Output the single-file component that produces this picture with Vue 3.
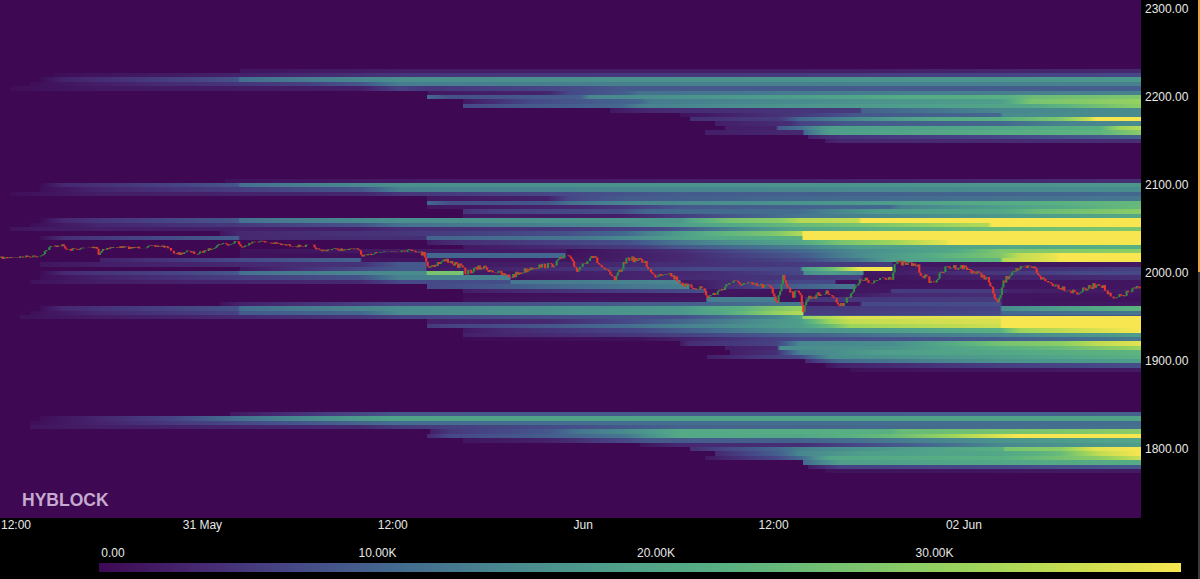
<template>
  <div class="page">
    <div class="main">
      <div class="top">
        <div class="chart">
          <svg class="heatmap" width="1141" height="518" viewBox="0 0 1141 518">
            <defs>
              <linearGradient
                v-for="row in rows"
                :id="row.id"
                :key="row.id"
                gradientUnits="userSpaceOnUse"
                x1="0"
                y1="0"
                x2="1141"
                y2="0"
              >
                <stop v-for="(s, i) in row.stops" :key="i" :offset="s.offset" :stop-color="s.color" />
              </linearGradient>
            </defs>
            <rect width="1141" height="518" fill="#3e0853" />
            <g class="soft">
              <rect
                v-for="row in rows"
                :key="row.id"
                x="0"
                :y="row.y"
                width="1141"
                :height="row.h"
                :fill="`url(#${row.id})`"
                shape-rendering="crispEdges"
              />
              <rect x="803" y="315" width="338" height="1" fill="#46558a" />
              <path :d="candles.green" class="candle green" />
              <path :d="candles.red" class="candle red" />
            </g>
          </svg>
          <div class="logo">HYBLOCK</div>
        </div>
        <div class="yaxis">
          <span v-for="p in prices" :key="p">{{ p }}</span>
        </div>
      </div>
      <div class="xaxis">
        <span v-for="(t, i) in times" :key="i" class="tick">{{ t }}</span>
      </div>
      <div class="legend">
        <div class="legend-labels">
          <span v-for="l in legendLabels" :key="l" class="legend-label">{{ l }}</span>
        </div>
        <div class="legend-bar"></div>
      </div>
    </div>
    <div class="scroll">
      <div class="thumb"></div>
    </div>
  </div>
</template>

<script setup>
const prices = ["2300.00", "2200.00", "2100.00", "2000.00", "1900.00", "1800.00"];
const times = ["12:00", "31 May", "12:00", "Jun", "12:00", "02 Jun"];
const legendLabels = ["0.00", "10.00K", "20.00K", "30.00K"];

const palette = [
  [0, [62, 8, 83]],
  [0.1, [70, 40, 113]],
  [0.2, [70, 72, 135]],
  [0.3, [67, 104, 143]],
  [0.4, [72, 135, 143]],
  [0.5, [78, 158, 139]],
  [0.6, [88, 176, 130]],
  [0.7, [120, 195, 112]],
  [0.8, [155, 212, 92]],
  [0.9, [205, 222, 80]],
  [1, [248, 230, 80]],
];

function colorOf(v) {
  for (let i = 1; i < palette.length; i++) {
    if (v <= palette[i][0]) {
      const [a, ca] = palette[i - 1];
      const [b, cb] = palette[i];
      const t = (v - a) / (b - a);
      const c = ca.map((n, j) => Math.round(n + (cb[j] - n) * t));
      return `rgb(${c[0]},${c[1]},${c[2]})`;
    }
  }
  return "rgb(248,230,80)";
}

// k is the row index, each row is one 5 USD price bucket. pairs are x, value
const bands = {
  0: [240, 0.04, 400, 0.07, 800, 0.07, 1141, 0.1],
  1: [53, 0.02, 240, 0.08, 400, 0.14, 800, 0.16, 1141, 0.2],
  2: [40, 0.01, 63, 0.08, 170, 0.17, 238, 0.23, 240, 0.32, 400, 0.43, 1141, 0.47],
  3: [30, 0.02, 100, 0.07, 170, 0.11, 300, 0.17, 360, 0.24, 400, 0.37, 1141, 0.38],
  4: [10, 0.02, 100, 0.05, 360, 0.07, 400, 0.18, 428, 0.14, 560, 0.2, 625, 0.25, 1141, 0.27],
  5: [428, 0.05, 548, 0.09, 570, 0.2, 625, 0.27, 640, 0.33, 800, 0.36, 1141, 0.38],
  6: [427, 0.3, 450, 0.22, 580, 0.27, 590, 0.4, 680, 0.45, 800, 0.5, 900, 0.57, 1010, 0.6, 1030, 0.66, 1141, 0.72],
  7: [463, 0.05, 530, 0.2, 640, 0.3, 650, 0.36, 800, 0.42, 893, 0.46, 1000, 0.5, 1030, 0.7, 1141, 0.78],
  8: [463, 0.2, 510, 0.24, 620, 0.3, 640, 0.38, 800, 0.46, 1030, 0.55, 1141, 0.76],
  9: [610, 0.05, 650, 0.1, 800, 0.14, 860, 0.16, 862, 0.28, 1000, 0.4, 1141, 0.42],
  10: [680, 0.03, 800, 0.15, 860, 0.25, 1000, 0.3, 1003, 0.42, 1141, 0.42],
  11: [690, 0.12, 780, 0.16, 800, 0.3, 860, 0.42, 930, 0.55, 1000, 0.6, 1060, 0.72, 1090, 0.9, 1096, 1, 1141, 1],
  12: [715, 0.07, 790, 0.12, 800, 0.18, 850, 0.25, 1000, 0.3, 1060, 0.38, 1141, 0.42],
  13: [725, 0.07, 776, 0.08, 778, 0.25, 800, 0.33, 830, 0.5, 1000, 0.55, 1100, 0.6, 1120, 0.8, 1141, 0.85],
  14: [705, 0.07, 803, 0.1, 804, 0.3, 830, 0.5, 1000, 0.58, 1100, 0.62, 1141, 0.75],
  15: [808, 0.08, 840, 0.14, 1000, 0.2, 1141, 0.28],
  16: [825, 0.06, 840, 0.1, 1141, 0.12],

  25: [225, 0.03, 400, 0.06, 800, 0.08, 1141, 0.12],
  26: [40, 0.01, 63, 0.1, 170, 0.18, 238, 0.24, 240, 0.33, 400, 0.44, 1141, 0.47],
  27: [40, 0.02, 100, 0.09, 240, 0.17, 360, 0.24, 400, 0.38, 1141, 0.42],
  28: [10, 0.02, 100, 0.07, 360, 0.09, 400, 0.14, 560, 0.2, 680, 0.26, 1141, 0.3],
  29: [427, 0.05, 548, 0.08, 570, 0.2, 625, 0.26, 800, 0.3, 1141, 0.35],
  30: [427, 0.3, 450, 0.22, 548, 0.25, 570, 0.33, 625, 0.4, 800, 0.45, 900, 0.5, 950, 0.55, 1141, 0.64],
  31: [427, 0.05, 463, 0.05, 580, 0.1, 625, 0.15, 680, 0.25, 800, 0.28, 890, 0.3, 900, 0.38, 1000, 0.5, 1141, 0.65],
  32: [463, 0.14, 500, 0.18, 620, 0.22, 650, 0.3, 800, 0.32, 880, 0.5, 1000, 0.55, 1040, 0.66, 1141, 0.75],
  33: [463, 0.05, 620, 0.07, 800, 0.35, 1141, 0.56],
  34: [40, 0.01, 63, 0.1, 100, 0.14, 238, 0.24, 240, 0.33, 400, 0.44, 680, 0.47, 690, 0.55, 730, 0.7, 780, 0.75, 800, 0.85, 858, 0.88, 862, 1, 1141, 1],
  35: [30, 0.02, 97, 0.09, 240, 0.15, 360, 0.23, 400, 0.33, 600, 0.4, 800, 0.65, 860, 0.7, 988, 0.85, 992, 1, 1141, 1],
  36: [10, 0.03, 30, 0.05, 100, 0.07, 360, 0.08, 400, 0.12, 560, 0.14, 660, 0.2, 800, 0.55, 900, 0.62, 1141, 0.72],
  37: [220, 0.04, 240, 0.1, 400, 0.14, 560, 0.22, 625, 0.3, 705, 0.58, 775, 0.72, 802, 0.85, 803, 1, 1141, 1],
  38: [40, 0.02, 63, 0.12, 160, 0.2, 238, 0.26, 240, 0.1, 400, 0.12, 426, 0.12, 427, 0.28, 580, 0.35, 620, 0.4, 700, 0.55, 802, 0.6, 803, 1, 1141, 1],
  39: [427, 0.07, 460, 0.12, 625, 0.22, 680, 0.35, 800, 0.55, 840, 0.7, 890, 0.8, 945, 0.95, 950, 1, 1141, 1],
  40: [463, 0.05, 540, 0.1, 640, 0.17, 680, 0.25, 800, 0.38, 860, 0.5, 1141, 0.6],
  41: [240, 0.03, 400, 0.06, 566, 0.06, 567, 0.02, 680, 0.12, 800, 0.3, 860, 0.42, 950, 0.55, 1000, 0.72, 1141, 0.76],
  42: [240, 0.03, 426, 0.02, 427, 0.3, 565, 0.3, 566, 0.03, 680, 0.1, 800, 0.25, 860, 0.42, 1000, 0.72, 1020, 0.88, 1055, 0.96, 1060, 1, 1141, 1],
  43: [100, 0.08, 240, 0.2, 360, 0.28, 362, 0.04, 566, 0.04, 680, 0.1, 800, 0.2, 860, 0.35, 892, 0.5, 1000, 0.62, 1003, 0.85, 1055, 0.96, 1060, 1, 1141, 1],
  44: [40, 0.04, 100, 0.07, 240, 0.1, 360, 0.13, 400, 0.25, 426, 0.25, 427, 0.04, 680, 0.12, 800, 0.16, 892, 0.16, 893, 0.04, 1141, 0.05],
  45: [240, 0.05, 400, 0.25, 426, 0.25, 427, 0.05, 700, 0.2, 800, 0.2, 803, 0.5, 830, 0.65, 860, 0.98, 892, 1, 893, 0.06, 1020, 0.1, 1141, 0.18],
  46: [40, 0.01, 63, 0.1, 100, 0.14, 170, 0.18, 238, 0.25, 240, 0.33, 400, 0.42, 426, 0.42, 427, 0.7, 463, 0.7, 464, 0.05, 700, 0.1, 803, 0.2, 804, 0.42, 830, 0.5, 863, 0.42, 864, 0.04, 1000, 0.15, 1090, 0.2, 1141, 0.2],
  47: [40, 0.02, 100, 0.08, 240, 0.17, 360, 0.23, 400, 0.38, 510, 0.38, 511, 0.04, 800, 0.15, 860, 0.18, 864, 0.03, 1000, 0.08, 1141, 0.12],
  48: [30, 0.03, 100, 0.07, 360, 0.1, 400, 0.2, 510, 0.22, 511, 0.35, 680, 0.4, 681, 0.05, 800, 0.2, 835, 0.2, 836, 0.03, 1141, 0.04],
  49: [427, 0.2, 600, 0.33, 689, 0.38, 690, 0.04, 800, 0.28, 855, 0.35, 856, 0.04, 1141, 0.04],
  50: [463, 0.07, 680, 0.2, 706, 0.22, 707, 0.04, 800, 0.04, 890, 0.05, 892, 0.16, 1000, 0.16, 1008, 0.08, 1141, 0.05],
  51: [463, 0.02, 707, 0.04, 830, 0.03, 890, 0.1, 1000, 0.12, 1003, 0.04, 1141, 0.04],
  52: [463, 0.03, 706, 0.05, 707, 0.37, 776, 0.37, 777, 0.03, 805, 0.03, 806, 0.14, 1000, 0.16, 1003, 0.04, 1141, 0.03],
  53: [220, 0.03, 240, 0.08, 400, 0.2, 707, 0.28, 803, 0.35, 804, 0.04, 860, 0.05, 862, 0.2, 1000, 0.22, 1003, 0.04, 1141, 0.05],
  54: [40, 0.02, 63, 0.1, 100, 0.13, 238, 0.23, 240, 0.32, 400, 0.42, 680, 0.47, 710, 0.55, 740, 0.6, 776, 0.72, 803, 0.78, 804, 0.15, 1000, 0.18, 1002, 0.42, 1141, 0.62],
  55: [30, 0.02, 100, 0.1, 238, 0.18, 240, 0.26, 360, 0.3, 400, 0.42, 680, 0.47, 720, 0.55, 776, 0.78, 803, 0.86, 804, 0.16, 1000, 0.2, 1002, 0.3, 1141, 0.35],
  56: [20, 0.03, 100, 0.06, 240, 0.1, 360, 0.14, 400, 0.18, 680, 0.22, 776, 0.4, 802, 0.55, 803, 0.78, 830, 0.85, 850, 0.93, 1000, 0.96, 1002, 1, 1141, 1],
  57: [427, 0.07, 550, 0.1, 625, 0.2, 800, 0.5, 830, 0.8, 850, 0.88, 1000, 0.93, 1002, 1, 1141, 1],
  58: [427, 0.15, 450, 0.18, 550, 0.25, 625, 0.32, 800, 0.5, 830, 0.65, 850, 0.8, 1000, 0.9, 1002, 1, 1141, 1],
  59: [463, 0.05, 500, 0.1, 640, 0.2, 800, 0.45, 890, 0.5, 1000, 0.6, 1020, 0.8, 1141, 1],
  60: [463, 0.08, 530, 0.1, 640, 0.15, 740, 0.22, 800, 0.28, 890, 0.35, 1000, 0.4, 1141, 0.5],
  61: [463, 0.01, 640, 0.03, 800, 0.2, 1000, 0.26, 1141, 0.36],
  62: [680, 0.05, 690, 0.12, 776, 0.18, 800, 0.4, 890, 0.42, 1003, 0.7, 1060, 0.75, 1100, 0.88, 1141, 0.95],
  63: [725, 0.07, 777, 0.1, 780, 0.42, 890, 0.45, 1000, 0.6, 1060, 0.65, 1141, 0.8],
  64: [730, 0.07, 776, 0.12, 800, 0.38, 880, 0.5, 1000, 0.55, 1141, 0.62],
  65: [707, 0.07, 800, 0.2, 830, 0.42, 1000, 0.5, 1141, 0.6],
  66: [805, 0.1, 840, 0.3, 1000, 0.45, 1141, 0.5],
  67: [825, 0.03, 840, 0.08, 1000, 0.17, 1141, 0.22],
  68: [850, 0.03, 1141, 0.06],

  78: [230, 0.05, 400, 0.25, 1141, 0.28],
  79: [40, 0.02, 170, 0.18, 240, 0.33, 400, 0.53, 1141, 0.53],
  80: [30, 0.02, 170, 0.15, 400, 0.32, 1141, 0.32],
  81: [30, 0.04, 100, 0.07, 360, 0.1, 400, 0.15, 570, 0.22, 680, 0.28, 1141, 0.33],
  82: [430, 0.07, 450, 0.15, 550, 0.25, 580, 0.35, 625, 0.42, 640, 0.45, 680, 0.56, 890, 0.6, 900, 0.65, 1141, 0.75],
  83: [427, 0.1, 450, 0.2, 550, 0.27, 625, 0.35, 680, 0.56, 800, 0.55, 890, 0.65, 950, 0.8, 1020, 1, 1141, 1],
  84: [463, 0.04, 550, 0.08, 625, 0.2, 650, 0.25, 800, 0.28, 1000, 0.45, 1141, 0.55],
  85: [640, 0.04, 680, 0.1, 800, 0.12, 860, 0.2, 1000, 0.4, 1141, 0.5],
  86: [690, 0.12, 780, 0.3, 800, 0.37, 860, 0.45, 1003, 0.6, 1005, 0.7, 1060, 0.75, 1096, 0.95, 1141, 1],
  87: [715, 0.1, 780, 0.28, 800, 0.4, 860, 0.5, 1003, 0.55, 1060, 0.65, 1100, 0.88, 1141, 1],
  88: [705, 0.05, 778, 0.2, 800, 0.3, 830, 0.55, 1003, 0.6, 1100, 0.75, 1141, 0.9],
  89: [803, 0.3, 840, 0.5, 1000, 0.55, 1141, 0.58],
  90: [808, 0.06, 840, 0.18, 1000, 0.2, 1141, 0.25],
  91: [825, 0.03, 1141, 0.06],
};

function toStops(pairs) {
  const stops = [{ offset: 0, color: colorOf(0) }, { offset: pairs[0] / 1141, color: colorOf(0) }];
  let prevX = pairs[0];
  let prevV = 0;
  for (let i = 0; i < pairs.length; i += 2) {
    const x = pairs[i];
    const v = pairs[i + 1];
    const n = x > prevX ? Math.max(1, Math.ceil(Math.abs(v - prevV) / 0.08)) : 1;
    for (let j = 1; j <= n; j++) {
      const t = j / n;
      stops.push({ offset: (prevX + (x - prevX) * t) / 1141, color: colorOf(prevV + (v - prevV) * t) });
    }
    prevX = x;
    prevV = v;
  }
  return stops;
}

const rows = Object.keys(bands).map((k) => {
  const top = Math.round(68.67 + 4.4 * k);
  const bottom = Math.round(68.67 + 4.4 * (Number(k) + 1));
  return { id: `row${k}`, y: top, h: bottom - top, stops: toStops(bands[k]) };
});

// price path, x and y read off the chart
const path = [
  [0, 258], [40, 256], [50, 247], [62, 245], [67, 250], [97, 247], [98, 255], [103, 249], [117, 247],
  [133, 248], [160, 246], [168, 247], [172, 252], [180, 254], [187, 251], [197, 254], [210, 249], [222, 243],
  [230, 245], [237, 240], [240, 247], [257, 241], [293, 246], [313, 246], [320, 251], [333, 249], [347, 250],
  [358, 248], [362, 257], [377, 252], [398, 251], [413, 250], [425, 255], [428, 267], [447, 260], [463, 268],
  [465, 273], [482, 267], [510, 277], [533, 267], [552, 265], [567, 255], [577, 270], [592, 255], [600, 265],
  [615, 280], [627, 258], [645, 262], [653, 276], [667, 272], [687, 287], [703, 288], [707, 297], [717, 293],
  [730, 282], [770, 287], [777, 302], [783, 277], [793, 295], [800, 290], [803, 313], [807, 298], [830, 292],
  [840, 307], [863, 278], [872, 285], [880, 278], [892, 277], [895, 263], [917, 265], [920, 273], [933, 283],
  [947, 267], [963, 267], [987, 278], [998, 305], [1003, 283], [1013, 270], [1033, 267], [1043, 280], [1063, 288],
  [1077, 293], [1100, 283], [1113, 300], [1133, 290], [1141, 287],
];

function priceAt(x) {
  for (let i = 1; i < path.length; i++) {
    if (x <= path[i][0]) {
      const [x0, y0] = path[i - 1];
      const [x1, y1] = path[i];
      return y0 + ((y1 - y0) * (x - x0)) / (x1 - x0);
    }
  }
  return path[path.length - 1][1];
}

function buildCandles() {
  let seed = 7;
  const rand = () => {
    seed = (seed * 16807) % 2147483647;
    return seed / 2147483647;
  };
  let red = "";
  let green = "";
  let prev = priceAt(0);
  for (let x = 1.4; x < 1141; x += 1.45) {
    const y = priceAt(x) + (rand() - 0.5) * (x < 420 ? 2.6 : 5.6);
    const seg = `M${x.toFixed(1)} ${prev.toFixed(1)}L${x.toFixed(1)} ${y.toFixed(1)}`;
    if (y >= prev) red += seg;
    else green += seg;
    prev = y;
  }
  return { red, green };
}

const candles = buildCandles();
</script>

<style scoped>
.page {
  display: flex;
  width: 1200px;
  height: 579px;
  background: #000;
  color: #e8e8e8;
  font-family: "Liberation Sans", Arial, sans-serif;
  font-size: 12px;
  overflow: hidden;
}
.main {
  width: 1198px;
  overflow: hidden;
}
.top {
  display: flex;
  height: 518px;
}
.chart {
  position: relative;
  flex: none;
  width: 1141px;
  height: 518px;
  overflow: hidden;
}
.heatmap {
  display: block;
}
.soft {
  filter: blur(0.5px);
}
.candle {
  fill: none;
  stroke-width: 2.1;
}
.red {
  stroke: #ea352b;
}
.green {
  stroke: #2f8f42;
}
.logo {
  position: absolute;
  left: 22px;
  bottom: 7px;
  font-size: 17.5px;
  font-weight: 700;
  line-height: 22px;
  color: #c6aad0;
}
.yaxis {
  flex: 1;
  display: flex;
  flex-direction: column;
  gap: 72px;
  padding: 1px 0 0 4px;
}
.yaxis span {
  line-height: 16px;
}
.scroll {
  width: 2px;
  background: #3a3a3a;
}
.thumb {
  height: 272px;
  background: #e8a33d;
}
.xaxis {
  display: flex;
  gap: 150.4px;
  margin-left: -4px;
  line-height: 14px;
  height: 14px;
}
.tick {
  flex: none;
  width: 40px;
  text-align: center;
}
.tick:first-child {
  margin-right: -4px;
}
.legend {
  margin-top: 14px;
  padding-left: 93px;
}
.legend-labels {
  display: flex;
  gap: 238.5px;
  line-height: 14px;
}
.legend-label {
  flex: none;
  width: 40px;
  text-align: center;
}
.legend-label:first-child {
  margin-right: -14px;
}
.legend-bar {
  width: 1082px;
  height: 9px;
  margin-top: 3px;
  margin-left: 6px;
  background: linear-gradient(
    to right,
    #3e0853 0%,
    #462871 9%,
    #464887 18%,
    #43688f 27%,
    #48878f 37%,
    #4e9e8b 47%,
    #58b082 58%,
    #78c370 69%,
    #9bd45c 80%,
    #cdde50 91%,
    #f8e650 100%
  );
}
</style>
